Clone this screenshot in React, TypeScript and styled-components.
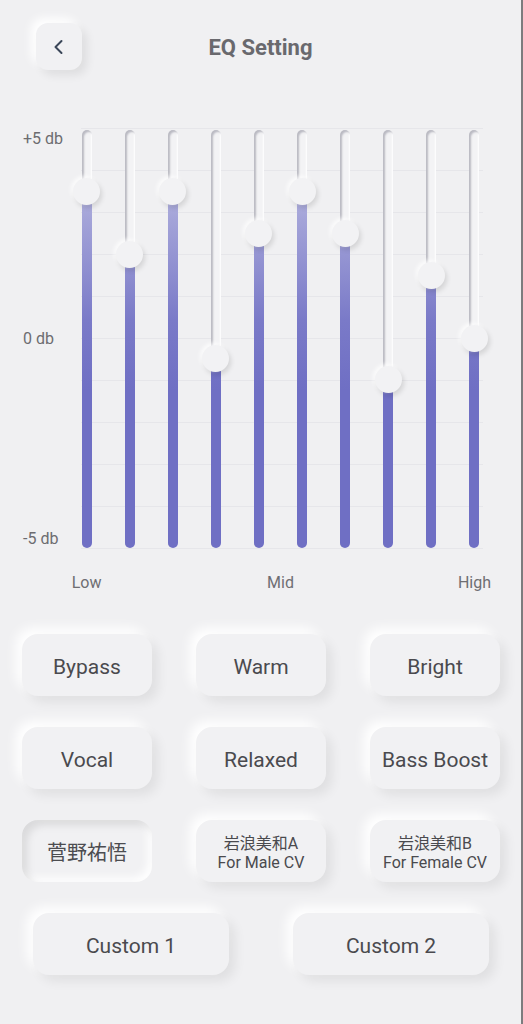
import React from "react";
import styled, { createGlobalStyle } from "styled-components";

const GlobalStyle = createGlobalStyle`
  html, body {
    margin: 0;
    padding: 0;
    background: #f0f0f2;
  }
  * {
    box-sizing: border-box;
  }
`;

const bands = [61, 124, 61, 228, 103, 61, 103, 249, 145, 208];
const TRACK_HEIGHT = 418;

const Page = styled.div`
  width: 523px;
  min-height: 1024px;
  background: #f0f0f2;
  border-right: 2px solid #7c7c7e;
  font-family: Roboto, "Noto Sans CJK JP", sans-serif;
  color: #48484b;
  padding-top: 23px;
`;

const Header = styled.header`
  display: grid;
  grid-template-columns: 1fr auto 1fr;
  align-items: center;
  height: 47px;
  padding-left: 36px;
`;

const BackButton = styled.button`
  width: 46px;
  height: 47px;
  border: none;
  border-radius: 12px;
  background: #f1f1f3;
  box-shadow: 5px 5px 10px rgba(0, 0, 0, 0.08), -5px -5px 10px #ffffff;
  display: flex;
  align-items: center;
  justify-content: center;
  padding: 0;
`;

const Title = styled.h1`
  margin: 0;
  padding-top: 2px;
  font-size: 22px;
  font-weight: 700;
  color: #69696e;
  margin-left: -36px;
`;

const Chart = styled.section`
  display: flex;
  margin-top: 58px;
`;

const Scale = styled.div`
  width: 65px;
  padding-left: 23px;
  margin-top: 1px;
  height: 420px;
  display: flex;
  flex-direction: column;
  justify-content: space-between;
  font-size: 16px;
  line-height: 20px;
  color: #6c6c70;
  white-space: nowrap;
`;

const Sliders = styled.div`
  position: relative;
  width: 431px;
  height: 421px;
  display: grid;
  grid-template-columns: repeat(10, 1fr);

  &::before {
    content: "";
    position: absolute;
    left: 16px;
    right: 13px;
    top: 0;
    bottom: 0;
    background: repeating-linear-gradient(
      to bottom,
      #e6e6ea 0px,
      #e6e6ea 1px,
      transparent 1px,
      transparent 42px
    );
  }
`;

const Band = styled.div`
  position: relative;
  display: flex;
  justify-content: center;
  padding-top: 2px;
`;

const Track = styled.div`
  position: relative;
  width: 10px;
  height: ${TRACK_HEIGHT}px;
  border-radius: 5px;
  background: #f3f3f5;
  box-shadow: inset 2px 2px 2px rgba(80, 80, 100, 0.35),
    inset -1px -1px 2px #ffffff;
`;

const Fill = styled.div`
  position: absolute;
  left: 0;
  right: 0;
  bottom: 0;
  border-radius: 0 0 5px 5px;
  background: linear-gradient(
    to bottom,
    #cfcfea 0px,
    #a3a3d8 90px,
    #7a7ac8 190px,
    #6f6fc4 260px,
    #6f6fc4 ${TRACK_HEIGHT}px
  );
  background-size: 100% ${TRACK_HEIGHT}px;
  background-position: bottom;
`;

const Knob = styled.div`
  position: absolute;
  left: 50%;
  width: 27px;
  height: 27px;
  margin-left: -13.5px;
  margin-top: -13.5px;
  border-radius: 50%;
  background: #f2f2f4;
  box-shadow: 2px 3px 5px rgba(0, 0, 0, 0.12), -2px -2px 4px rgba(255, 255, 255, 0.8);
`;

const Axis = styled.div`
  display: grid;
  grid-template-columns: repeat(10, 1fr);
  width: 431px;
  margin-left: 65px;
  margin-top: 24px;
  font-size: 16px;
  line-height: 20px;
  color: #6e6e72;
`;

const AxisLabel = styled.span<{ $from: number; $to: number }>`
  grid-column: ${({ $from, $to }) => `${$from} / ${$to}`};
  text-align: center;
  white-space: nowrap;
  justify-self: center;
`;

const Presets = styled.div`
  display: grid;
  grid-template-columns: repeat(3, 130px);
  column-gap: 44px;
  row-gap: 31px;
  padding-left: 22px;
  margin-top: 41px;
`;

const Preset = styled.button<{ $active?: boolean; $small?: boolean }>`
  height: 62px;
  border: none;
  border-radius: 16px;
  background: #f1f1f3;
  font-family: Roboto, "Noto Sans CJK JP", sans-serif;
  font-size: ${({ $small }) => ($small ? "16px" : "21px")};
  line-height: ${({ $small }) => ($small ? "19px" : "24px")};
  color: #4a4a4e;
  padding: 3px 0 0;
  white-space: nowrap;
  box-shadow: ${({ $active }) =>
    $active
      ? "inset 5px 5px 8px rgba(0, 0, 0, 0.1), inset -4px -4px 8px #ffffff"
      : "6px 6px 12px rgba(0, 0, 0, 0.07), -6px -6px 12px #ffffff"};
`;

const CjkLabel = styled.span`
  font-size: 20px;
  font-family: "Noto Sans CJK JP", sans-serif;
  color: #4c4c50;
`;

const CustomRow = styled.div`
  display: grid;
  grid-template-columns: repeat(2, 196px);
  column-gap: 64px;
  padding-left: 33px;
  margin-top: 31px;
`;

const Small = styled.span`
  display: block;
`;

const presets = ["Bypass", "Warm", "Bright", "Vocal", "Relaxed", "Bass Boost"];

export default function App() {
  return (
    <Page>
      <GlobalStyle />
      <Header>
        <BackButton aria-label="Back">
          <svg width="14" height="18" viewBox="0 0 14 18">
            <polyline
              points="9.5,3 3.5,9 9.5,15"
              fill="none"
              stroke="#3a4658"
              strokeWidth="2"
              strokeLinecap="round"
              strokeLinejoin="round"
            />
          </svg>
        </BackButton>
        <Title>EQ Setting</Title>
        <span />
      </Header>

      <Chart>
        <Scale>
          <span>+5 db</span>
          <span>0 db</span>
          <span>-5 db</span>
        </Scale>
        <Sliders>
          {bands.map((top, i) => (
            <Band key={i}>
              <Track>
                <Fill style={{ height: TRACK_HEIGHT - top }} />
                <Knob style={{ top }} />
              </Track>
            </Band>
          ))}
        </Sliders>
      </Chart>

      <Axis>
        <AxisLabel $from={1} $to={2}>Low</AxisLabel>
        <AxisLabel $from={5} $to={7}>Mid</AxisLabel>
        <AxisLabel $from={10} $to={11}>High</AxisLabel>
      </Axis>

      <Presets>
        {presets.map((p) => (
          <Preset key={p}>{p}</Preset>
        ))}
        <Preset $active>
          <CjkLabel>菅野祐悟</CjkLabel>
        </Preset>
        <Preset $small>
          <Small>岩浪美和A</Small>
          <Small>For Male CV</Small>
        </Preset>
        <Preset $small>
          <Small>岩浪美和B</Small>
          <Small>For Female CV</Small>
        </Preset>
      </Presets>

      <CustomRow>
        <Preset>Custom 1</Preset>
        <Preset>Custom 2</Preset>
      </CustomRow>
    </Page>
  );
}
